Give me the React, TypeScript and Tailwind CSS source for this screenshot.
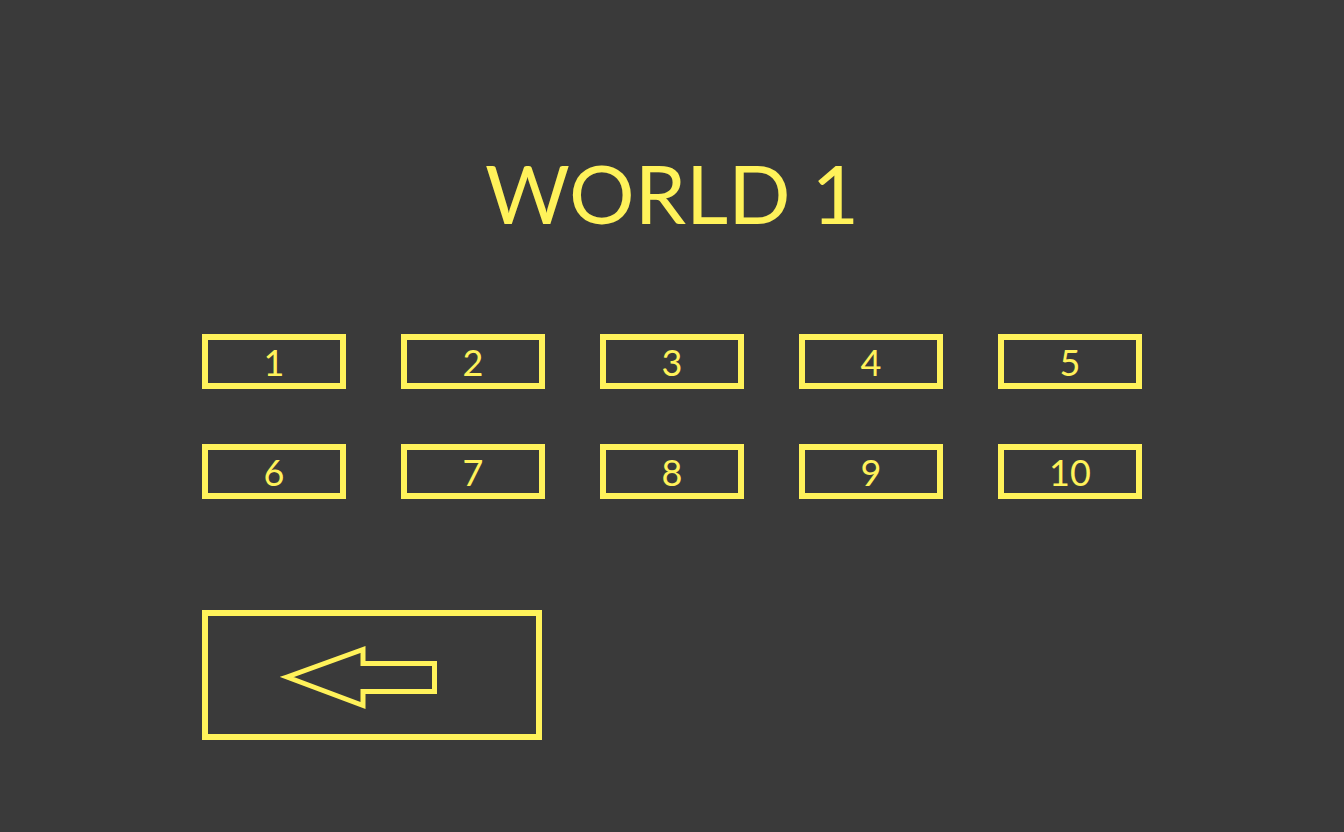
import React from 'react';

const LEVELS = [1, 2, 3, 4, 5, 6, 7, 8, 9, 10];

const BackArrow: React.FC = () => (
  <svg width="160" height="66" viewBox="0 0 160 66" fill="none">
    <polygon
      points="7,33 83,5.5 83,19.5 154.5,19.5 154.5,47.5 83,47.5 83,61.5"
      stroke="#fff25a"
      strokeWidth="5"
      strokeLinejoin="miter"
    />
  </svg>
);

export default function App() {
  return (
    <div
      className="w-full h-[832px] bg-[#3a3a3a] text-[#fff25a] flex flex-col"
      style={{ fontFamily: 'Lato, "Open Sans", sans-serif' }}
    >
      <h1 className="mt-[151px] text-center text-[82px] leading-none font-normal">WORLD 1</h1>

      <div className="mx-auto mt-[101px] w-[940px] grid grid-cols-5 gap-x-[55px] gap-y-[55px]">
        {LEVELS.map((n) => (
          <button
            key={n}
            className="h-[55px] border-[6px] border-[#fff25a] flex items-center justify-center text-[36px] leading-none"
          >
            {n}
          </button>
        ))}
      </div>

      <div className="mx-auto w-[940px] mt-[111px]">
        <button className="w-[340px] h-[130px] border-[6px] border-[#fff25a] flex items-start pl-[72px] pt-[28px]">
          <BackArrow />
        </button>
      </div>
    </div>
  );
}
